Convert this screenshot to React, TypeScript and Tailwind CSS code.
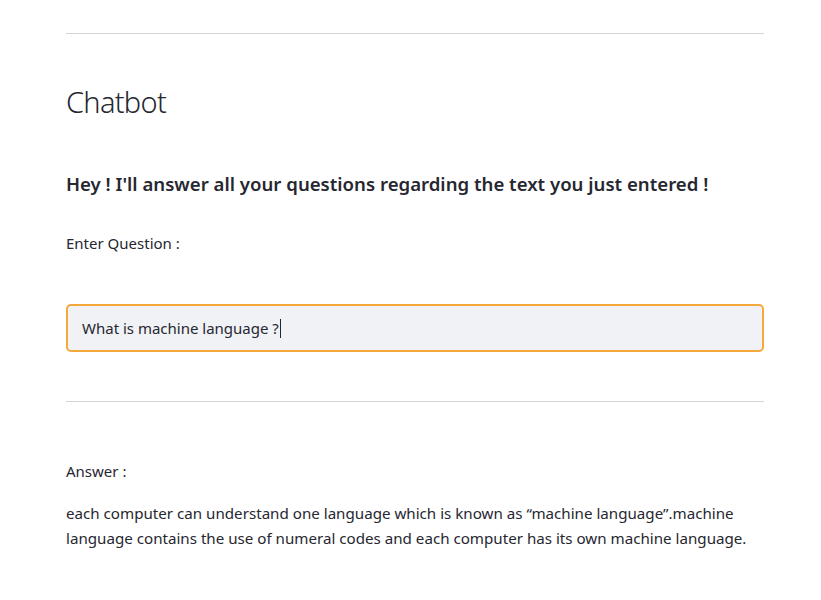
export default function App() {
  return (
    <div
      className="min-h-[600px] bg-white text-[#262730]"
      style={{ fontFamily: '"Noto Sans", "Open Sans", sans-serif' }}
    >
      <div className="ml-[66px] w-[698px] pt-[33px]">
        <hr className="border-0 border-t border-[#d6d6d9]" />

        <h1 className="mt-[50px] text-[29px] font-light leading-[36px] tracking-tight">Chatbot</h1>

        <h3 className="mt-[52px] text-[18.6px] font-semibold leading-[24px]">
          Hey ! I'll answer all your questions regarding the text you just entered !
        </h3>

        <p className="mt-[37px] text-[15px] leading-[20px]">Enter Question :</p>

        <div className="mt-[51px] flex h-[48px] items-center rounded-[5px] border-2 border-[#f5a83b] bg-[#f0f2f6] px-[14px]">
          <span className="text-[15px]">What is machine language ?</span>
          <span className="ml-px inline-block h-[19px] w-px bg-[#262730]" />
        </div>

        <hr className="mt-[49px] border-0 border-t border-[#d6d6d9]" />

        <p className="mt-[59px] text-[15px] leading-[20px]">Answer :</p>

        <p className="mt-[20px] text-[15.15px] leading-[25px]">
          each computer can understand one language which is known as “machine language”.machine
          language contains the use of numeral codes and each computer has its own machine language.
        </p>
      </div>
    </div>
  );
}
